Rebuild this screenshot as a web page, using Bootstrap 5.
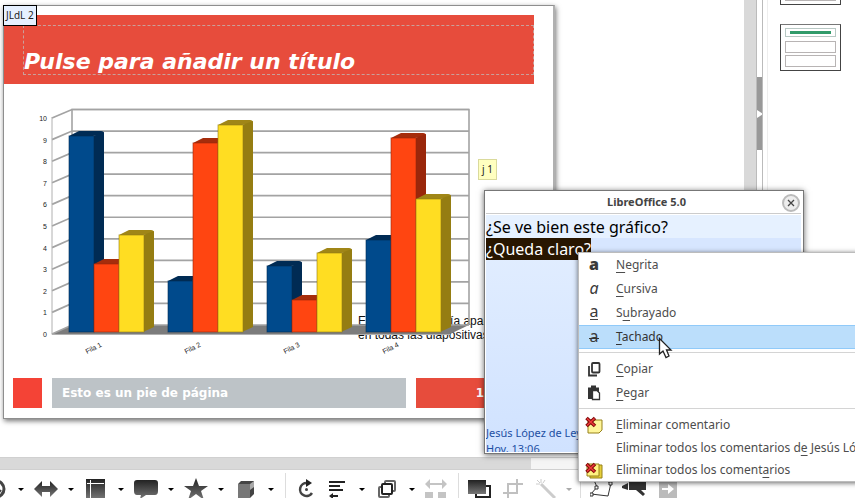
<!DOCTYPE html>
<html lang="es">
<head>
<meta charset="utf-8">
<meta name="viewport" content="width=device-width, initial-scale=1">
<title>LibreOffice Impress</title>
<link href="https://cdn.jsdelivr.net/npm/bootstrap@5.3.0/dist/css/bootstrap.min.css" rel="stylesheet">
<style>
body{font-family:"Noto Sans","Open Sans",sans-serif;font-size:12px;color:#4d4d4d;background:#fff}
.workspace{min-height:0}
.slide{width:552px;margin:5px 0 0 3px;border:1px solid #8e8e8e;border-right-width:2px;border-right-color:#b0b0b0;box-shadow:1px 2px 5px rgba(0,0,0,.55)}
.slide,.slide-title,.foot{font-family:"DejaVu Sans",sans-serif}
.band{background:#e74c3c;margin:9px 19px 0 0;height:69px;padding:10px 0 9px 19px}
.slide-title{border:1px dashed #c9a09b;color:#fff;font-size:22px;line-height:24px;font-weight:bold;font-style:italic}
.foot{font-size:12px;font-weight:bold;color:#fff;height:30px;margin:0 19px 10px 9px;gap:10px}
.foot-mark{width:29px;background:#f44336}
.foot-text{background:#bdc3c7;width:354px;padding-left:10px}
.foot-num{background:#e74c3c;padding-left:10px}
.tag-a,.tag-b{color:#222;line-height:15px}
.tag-a{left:3px;top:5px;padding:2px;border:1px solid #000;background:#e6f0ff;font-size:10px}
.tag-b{left:478px;top:159px;padding:2px 3px;border:1px solid #dada9c;background:#ffffc0;font-size:10px}
.vbar{width:13px;background:#d9d9d9;border-right:1px solid #bbb}
.hbar{height:12px;background:#f5f5f5;border-top:1px solid #d0d0d0}
.hbar div{width:531px;background:#d9d9d9}
.splitter{width:6px;border-right:1px solid #bbb}
.grip{margin-top:77px;height:73px;background:#999}
.sidebar{width:88px;margin-left:4px;border-left:1px solid #eee;padding-left:12px}
.thumb{width:61px;height:47px;border:1px solid #444;border-top-color:#777;padding:3px 4px;gap:2px}
.thumb+.thumb{margin-top:19px}
.thumb:first-child{margin-top:-42px}
.thumb span{height:12px;border:1px solid #b8b4b4}
.thumb .head{height:9px;border-color:#b8c8c4;padding:2px 4px;margin-bottom:2px}
.thumb .head i{display:block;height:3px;background:#319b6a}
.tools{height:29px;border-top:1px solid #d0d0d0}
.tools-row{height:38px;margin-left:-23px}
.tb,.tc{border:0;padding:0;background:none;height:32px;display:flex;align-items:center;justify-content:center;flex:none}
.tb{width:38px}.tb.slim{width:33px}.tb.turn{width:24px}.tb.wide{width:36px}
.tc{width:12px}.tc.off{width:14px}
.tc:after{content:"";border:3px solid transparent;border-top-color:#000;border-bottom:0}
.tc.off:after{border-top-color:#aaa}
.rule{width:1px;height:32px;background:#ddd;flex:none}
.note{left:484px;top:190px;width:320px;height:264px;border:1px solid #777;background:#fff;box-shadow:0 1px 6px rgba(0,0,0,.6);padding:0 2px 1px 1px}
.note-bar{height:23px;font-size:11px;font-weight:bold;color:#444;border-bottom:1px solid #ccc;padding-left:6px}
.note-close{right:3px;top:3px;width:18px;height:18px;border:2px solid #bbb;border-radius:50%;background:#ededed;padding:0}
.note-body{margin-top:1px;background:linear-gradient(#e4efff,#d0e2ff);font-size:16px;line-height:22px;color:#000}
.note-body .l1{height:23px;line-height:24px;background:#e6f1ff}
.note-body .l2{background:#d7e6ff}
.note-body .l2 span{background:#281600;color:#fff;display:inline-block}
.note-sign{font-size:11px;line-height:16px;color:#1d4fa3;height:27px;overflow:hidden;white-space:nowrap}
.note-text{outline:0;min-height:0}
.ctx{left:578px;right:-40px;top:252px;border:1px solid #bcbcbc;background:#fff;box-shadow:0 1px 5px rgba(0,0,0,.6);overflow:hidden}
.ctx .dropdown-item{font-size:12px;line-height:16px;padding:4px 0 4px 6px;height:24px;color:#4d4d4d;display:flex;align-items:center}
.ctx .dropdown-item.tight{height:22px;padding:3px 0 3px 6px}
.ctx .dropdown-item.hot{background:#bbdefb;box-shadow:inset 0 1px #90caf9,inset 0 -1px #90caf9;color:#333}
.ctx .dropdown-item svg,.ctx .gap-icon{width:18px;height:18px;margin-right:13px;flex:none}
.ctx .glyph{font-size:16px;fill:#3a3a3a;text-anchor:middle}
.ctx u{text-underline-offset:3px}
.ctx hr{margin:3px 0 4px;border-color:#aaa;opacity:.5}
.pointer{left:658px;top:337px}
</style>
<script src="https://cdn.jsdelivr.net/npm/bootstrap@5.3.0/dist/js/bootstrap.bundle.min.js"></script>
</head>
<body class="vh-100 overflow-hidden position-relative d-flex flex-column">
<div class="workspace d-flex flex-grow-1">
  <main class="flex-grow-1 d-flex flex-column overflow-hidden">
    <div class="flex-grow-1">
      <article class="slide bg-white">
        <header class="band"><h1 class="slide-title h-100 m-0 d-flex align-items-end">Pulse para añadir un título</h1></header>
        <svg id="chart" class="d-block" width="530" height="294" viewBox="4 84 530 294" role="img" aria-label="Gráfico de columnas">
          <g font-family="Liberation Sans, sans-serif" font-size="12" fill="#111"><text x="358" y="325">Esta otra fotografía aparece</text><text x="358" y="339">en todas las diapositivas</text></g>
          <path d="M52 334L72 325H469L450 334Z" fill="#7c7c7c"/>
          <g id="grid" fill="none" stroke="#a3a3a3" stroke-width="1.7"></g>
          <path d="M52 117V334.500H450" fill="none" stroke="#b0b0b0"/>
          <path d="M72 325V109.500H469V325" fill="none" stroke="#a3a3a3" stroke-width="1.600"/>
          <g id="bars"></g>
          <g id="labels" font-family="Liberation Sans, sans-serif" font-size="7" fill="#222"></g>
        </svg>
        <footer class="foot d-flex align-items-stretch">
          <div class="foot-mark"></div>
          <div class="foot-text d-flex align-items-center">Esto es un pie de página</div>
          <div class="foot-num flex-grow-1 d-flex align-items-center justify-content-center">1</div>
        </footer>
      </article>
    </div>
    <div class="hbar d-flex"><div></div></div>
  </main>
  <div class="vbar"></div>
  <div class="splitter"><div class="grip d-flex align-items-center"><svg width="6" height="8"><path d="M0 0L6 4 0 8Z" fill="#fff"/></svg></div></div>
  <aside class="sidebar">
    <div class="thumb d-flex flex-column"><span class="head"><i></i></span><span></span><span></span></div>
    <div class="thumb d-flex flex-column"><span class="head"><i></i></span><span></span><span></span></div>
  </aside>
</div>

<nav class="tools overflow-hidden flex-shrink-0" aria-label="Dibujo">
  <svg width="0" height="0" class="position-absolute"><defs><linearGradient id="ink" x2="0" y2="1"><stop stop-color="#222"/><stop offset="1" stop-color="#777"/></linearGradient></defs></svg>
  <div class="tools-row d-flex align-items-center">
    <button class="tb" aria-label="Símbolos"><svg width="20" height="20" fill="none" stroke="#444" stroke-width="3"><circle cx="10" cy="10" r="8"/><path d="M5 11Q10 18 15 11M7 6v2M13 6v2" stroke-width="2"/></svg></button><button class="tc" aria-label="Más símbolos"></button>
    <button class="tb" aria-label="Flechas"><svg width="24" height="20"><path d="M0 10L8 2V7H16V2L24 10 16 18V13H8V18Z" fill="url(#ink)"/></svg></button><button class="tc" aria-label="Más flechas"></button>
    <button class="tb" aria-label="Diagramas"><svg width="20" height="20"><path d="M0 0H19V20H0Z" fill="url(#ink)"/><path d="M1 4.500H18M4.500 1V20" stroke="#fff" fill="none"/></svg></button><button class="tc" aria-label="Más diagramas"></button>
    <button class="tb" aria-label="Llamadas"><svg width="24" height="20"><path d="M3 1H21Q24 1 24 4V12Q24 16 21 16H12L6 20 7 16H3Q0 16 0 12V4Q0 1 3 1Z" fill="url(#ink)"/></svg></button><button class="tc" aria-label="Más llamadas"></button>
    <button class="tb" aria-label="Estrellas"><svg width="24" height="22"><path d="M12 0L15 8H24L17 13 20 22 12 16 4 22 7 13 0 8H9Z" fill="url(#ink)"/></svg></button><button class="tc" aria-label="Más estrellas"></button>
    <button class="tb" aria-label="Objetos 3D"><svg width="16" height="18"><path d="M0 4L3 1H16V14L12 18H0Z" fill="#444"/><path d="M0 4H12V18H0Z" fill="#777"/><path d="M12 4L16 1V7L12 10Z" fill="#aaa"/></svg></button><button class="tc" aria-label="Más objetos"></button>
    <span class="rule mx-2"></span>
    <button class="tb turn" aria-label="Girar"><svg width="16" height="20" fill="none" stroke="#444" stroke-width="2.500"><path d="M9 4A6.500 6.500 0 1 0 14 14"/><path d="M8 0L14 4 8 8Z" fill="#222" stroke="none"/><circle cx="8.500" cy="10.500" r="1.500" fill="#444" stroke="none"/></svg></button>
    <button class="tb" aria-label="Alinear"><svg width="16" height="20" fill="none" stroke="#222" stroke-width="2"><path d="M0 3H16M0 7H11M0 11H14M3 17H9"/><path d="M0 17L4 14V20Z" fill="#222" stroke="none"/></svg></button><button class="tc" aria-label="Más alineaciones"></button>
    <button class="tb" aria-label="Organizar"><svg width="18" height="20" fill="#fff" stroke="#666" stroke-width="2"><rect x="7" y="2" width="10" height="10" rx="1"/><rect x="1" y="8" width="10" height="10" rx="1"/><rect x="4" y="5" width="10" height="10" rx="1" stroke="#222"/></svg></button><button class="tc" aria-label="Más orden"></button>
    <button class="tb wide" aria-label="Distribuir"><svg width="22" height="20" fill="#c4c4c4"><path d="M0 5L5 0V4H17V0L22 5 17 10V6H5V10ZM0 13H8V20H0ZM13 13H21V20H13Z"/></svg></button>
    <span class="rule mx-1"></span>
    <button class="tb slim" aria-label="Sombra"><svg width="23" height="20"><rect x="8" y="7" width="14" height="11" fill="#fff" stroke="#222" stroke-width="2"/><path d="M0 1H18V15H0Z" fill="url(#ink)"/></svg></button>
    <button class="tb slim" aria-label="Recortar"><svg width="20" height="20" fill="none" stroke="#c0c0c0" stroke-width="2"><path d="M0 14H14V0M5 20V5H20"/></svg></button>
    <button class="tb slim" aria-label="Filtro"><svg width="20" height="20" fill="none" stroke="#ccc"><path d="M5 5L19 19" stroke-width="3"/><path d="M5 0V4M0 5H4M1 1L4 4M9 1L7 4"/></svg></button><button class="tc off" aria-label="Más filtros"></button>
    <span class="rule mx-1"></span>
    <button class="tb slim" aria-label="Puntos"><svg width="24" height="22" fill="none" stroke="#333"><path d="M3 0L7 9 1 16 18 18 21 5 14 2"/><path d="M5 8h3v3h-3zM0 15h3v3h-3zM19 4h3v3h-3z" fill="#fff"/></svg></button>
    <button class="tb slim" aria-label="Proyección"><svg width="25" height="20"><path d="M0 7L6 4V11L0 9ZM7 3H24V11H19L23 15 21 17 14 11H7Z" fill="#333"/></svg></button>
    <button class="tb slim" aria-label="Extrusión"><svg width="18" height="18"><path d="M0 0H18V18H0Z" fill="#bbb"/><path d="M3 8H9V4L15 9 9 14V10H3Z" fill="#fff"/></svg></button>
  </div>
</nav>

<span class="tag-a position-absolute">JLdL 2</span>
<span class="tag-b position-absolute">j 1</span>

<section class="note position-absolute d-flex flex-column" role="dialog" aria-label="LibreOffice 5.0">
  <div class="note-bar d-flex align-items-center justify-content-center flex-shrink-0">LibreOffice 5.0<button class="note-close position-absolute d-flex align-items-center justify-content-center" aria-label="Cerrar"><svg class="flex-shrink-0" width="8" height="8" stroke="#444" stroke-width="1.300"><path d="M1 1L7 7M7 1L1 7"/></svg></button></div>
  <div class="note-body flex-grow-1 d-flex flex-column">
    <div class="note-text flex-grow-1" role="textbox" contenteditable="true" aria-label="Comentario"><div class="l1">¿Se ve bien este gráfico?</div><div class="l2"><span>¿Queda claro?</span></div></div>
    <div class="note-sign">Jesús López de Ley<br>Hoy, 13:06</div>
  </div>
</section>

<div class="ctx position-absolute" role="menu">
  <button class="dropdown-item" role="menuitem"><svg viewBox="0 0 18 18" aria-hidden="true"><text class="glyph" x="9" y="14" font-weight="900">a</text></svg><span><u>N</u>egrita</span></button>
  <button class="dropdown-item" role="menuitem"><svg viewBox="0 0 18 18" aria-hidden="true"><text class="glyph" x="9" y="14" font-style="italic">a</text></svg><span><u>C</u>ursiva</span></button>
  <button class="dropdown-item" role="menuitem"><svg viewBox="0 0 18 18" aria-hidden="true"><text class="glyph" x="9" y="13">a</text><path d="M5 15.500H13" stroke="#444"/></svg><span>S<u>u</u>brayado</span></button>
  <button class="dropdown-item hot" role="menuitem"><svg viewBox="0 0 18 18" aria-hidden="true"><text class="glyph" x="9" y="14">a</text><path d="M4 10.500H14" stroke="#333"/></svg><span><u>T</u>achado</span></button>
  <hr>
  <button class="dropdown-item" role="menuitem"><svg viewBox="0 0 18 18" fill="none" stroke="#333" stroke-width="1.800" aria-hidden="true"><rect x="7" y="3" width="7.500" height="9.500" rx="1"/><path d="M4 6V15.500H12"/></svg><span><u>C</u>opiar</span></button>
  <button class="dropdown-item" role="menuitem"><svg viewBox="0 0 18 18" aria-hidden="true"><path d="M3 3.500H6V1.500H11V3.500H14V15H3Z" fill="#333"/><path d="M7.500 6.500H12L14.500 9V15.500H7.500Z" fill="#fff" stroke="#333" stroke-width="1.300"/></svg><span><u>P</u>egar</span></button>
  <hr>
  <button class="dropdown-item" role="menuitem"><svg viewBox="0 0 18 18" aria-hidden="true"><path d="M3 4H17V14L14 17H3Z" fill="#fff69a" stroke="#96811b"/><path d="M1.500 2L10 10M10 2L1.500 10" stroke="#7e0808" stroke-width="3.600"/><path d="M2 2.500L9.500 9.500M9.500 2.500L2 9.500" stroke="#ef3b3b" stroke-width="1.600"/></svg><span><u>E</u>liminar comentario</span></button>
  <button class="dropdown-item tight" role="menuitem"><span class="gap-icon"></span><span>Eliminar todos los comentarios d<u>e</u> Jesús López de Ley</span></button>
  <button class="dropdown-item tight" role="menuitem"><svg viewBox="0 0 18 18" aria-hidden="true"><path d="M5 4H17V17H5Z" fill="#e6cf3a" stroke="#96811b"/><path d="M2 3H14V15H2Z" fill="#fff280" stroke="#96811b"/><path d="M1.500 3L10 11M10 3L1.500 11" stroke="#7e0808" stroke-width="3.600"/><path d="M2 3.500L9.500 10.500M9.500 3.500L2 10.500" stroke="#ef3b3b" stroke-width="1.600"/></svg><span>Eliminar todos los coment<u>a</u>rios</span></button>
</div>
<svg class="pointer position-absolute pe-none" width="16" height="22" aria-hidden="true"><path d="M1.500 1.500V17L5 14 8 20.500 11 19 8.500 13H13Z" fill="#fff" stroke="#222" stroke-width="1.300"/></svg>

<script>
const palette = [["#004a8c","#002b54","#002b54"],["#ff4511","#9a270b","#a52d0c"],["#ffdd22","#957d12","#a08617"]];
// Each group: left edge, then the top of its three columns
const groups = [[69,136,264,235],[168,281,143,125],[267,266,300,253],[366,240,138,199]];
let bars = "", grid = "", labels = "";
groups.forEach((g, i) => {
  palette.forEach((c, k) => {
    const x = g[0] + k * 25, t = g[k + 1];
    bars += `<path d="M${x} ${t}l10 -5h22q3 0 3 3L${x+24} ${t}Z" fill="${c[2]}"/>` +
      `<path d="M${x+24} ${t}l11 -4V327l-11 5Z" fill="${c[1]}"/>` +
      `<rect x="${x}" y="${t}" width="25" height="${332-t}" fill="${c[0]}" stroke="${c[1]}" stroke-opacity=".6"/>`;
  });
  labels += `<text transform="translate(${g[0]+18} 354) rotate(-27)">Fila ${i+1}</text>`;
});
for (let n = 0; n <= 10; n++) {
  const front = 334 - n * 21.6, back = 325 - n * 21.55;
  grid += `<path d="M52 ${front}L72 ${back}H469"/>`;
  labels += `<text x="47" y="${front+3}" text-anchor="end">${n}</text>`;
}
document.getElementById("bars").innerHTML = bars;
document.getElementById("grid").innerHTML = grid;
document.getElementById("labels").innerHTML = labels;
</script>
</body>
</html>
